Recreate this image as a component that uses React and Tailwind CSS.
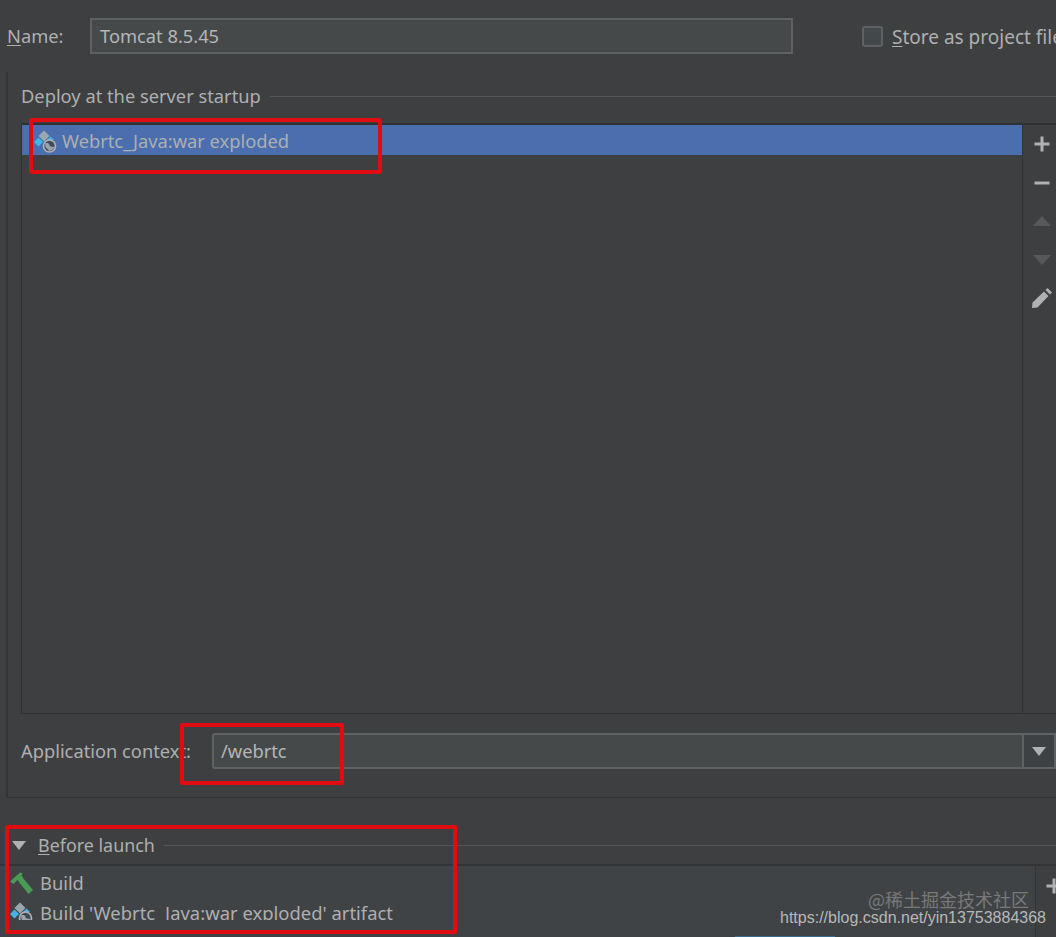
import React from 'react';

const uiFont = "font-['Noto_Sans',sans-serif]";

function ArtifactIcon({ className }) {
  return (
    <svg viewBox="0 0 23 23" className={className}>
      <path d="M10 0.5 L15.5 6 L10 11.5 L4.5 6 Z" fill="#9aa7b0" />
      <path d="M4.5 7.5 L9 12 L4.5 16.5 L0 12 Z" fill="#40b6e0" />
      <path d="M16.5 6.5 L20 10 L16 10.5 L13 10 Z" fill="#40b6e0" />
      <circle cx="15.5" cy="16" r="6" fill="#3e4a5c" stroke="#afb1b3" strokeWidth="1.7" />
      <path d="M11 13.5 C13 12.5 15 13 15.5 15 C16 17 18 16.5 20.5 17 C19.5 19.5 17 21 15 21 C14.5 19.5 12 18.5 11.5 17 Z" fill="#9aa3aa" />
    </svg>
  );
}

function HammerIcon({ className }) {
  return (
    <svg viewBox="0 0 23 23" className={className}>
      <path d="M0 9.5 L10 0.5 L12.5 1.5 L11.5 4 L13.5 6 L9.5 10 L7.5 8 L3.5 12 Z" fill="#499c54" />
      <path d="M8.5 9.5 L12.5 5.5 L23 18 L18.5 22 Z" fill="#499c54" />
    </svg>
  );
}

function GroupTitle({ children, className = '' }) {
  return (
    <div className={`flex items-center ${className}`}>
      <span className="shrink-0">{children}</span>
      <div className="ml-[9px] h-px flex-1 bg-[#535557]" />
    </div>
  );
}

function SideButton({ children, className = '' }) {
  return <div className={`flex h-[38.5px] items-center justify-center ${className}`}>{children}</div>;
}

export default function App() {
  return (
    <div className={`relative h-[937px] w-[1056px] overflow-hidden bg-[#3e3f41] text-[18.3px] leading-[26px] text-[#adafb1] ${uiFont}`}>
      {/* Name row */}
      <div className="flex h-[72px] items-start pl-[7px] pt-[18px]">
        <label className="mt-[5px] w-[83px] shrink-0"><span className="underline underline-offset-2">N</span>ame:</label>
        <div className="flex h-[36px] w-[703px] shrink-0 items-center border-2 border-[#5f6264] bg-[#45494a] pl-2 text-[#b4b6b7]">Tomcat 8.5.45</div>
        <div className="ml-[69px] mt-[8px] h-[21px] w-[21px] shrink-0 rounded-[3px] border-2 border-[#5d6163] bg-[#43484a]" />
        <label className="ml-[9px] mt-[6px] whitespace-nowrap text-[19px]"><span className="underline underline-offset-2">S</span>tore as project file</label>
      </div>

      {/* Deploy panel */}
      <div className="ml-[6px] h-[726px] border-b border-l-2 border-[#323436] pl-[13px] pt-[11px]">
        <GroupTitle className="h-[26px]">Deploy at the server startup</GroupTitle>
        <div className="mt-[14px] flex h-[591px] border-b border-l border-t-2 border-[#2f3133]">
          <div className="min-w-0 flex-1">
            <div className="flex h-[30px] items-center bg-[#4b6eaf] pl-[12px]">
              <ArtifactIcon className="mt-[2px] h-[23px] w-[23px] shrink-0" />
              <span className="ml-[5px] mt-[2px]">Webrtc_Java:war exploded</span>
            </div>
          </div>
          <div className="w-[34px] shrink-0 border-l border-[#323436] pl-[5px]">
            <SideButton>
              <svg viewBox="0 0 16 16" className="h-4 w-4"><path d="M6.5 0.5h3v6h6v3h-6v6h-3v-6h-6v-3h6z" fill="#afb1b3" /></svg>
            </SideButton>
            <SideButton>
              <svg viewBox="0 0 16 16" className="h-4 w-4"><rect x="0.5" y="6.5" width="15" height="3" fill="#afb1b3" /></svg>
            </SideButton>
            <SideButton>
              <svg viewBox="0 0 18 10" className="h-[10px] w-[18px]"><path d="M9 0 L18 10 H0 Z" fill="#56595b" /></svg>
            </SideButton>
            <SideButton>
              <svg viewBox="0 0 18 10" className="h-[10px] w-[18px]"><path d="M0 0 H18 L9 10 Z" fill="#56595b" /></svg>
            </SideButton>
            <SideButton>
              <svg viewBox="0 0 20 20" className="h-5 w-5"><path d="M0 20 L0.5 14.5 L12 3.5 L16.5 8 L5.5 19.5 Z M13.5 2 L15.5 0 L20 4.5 L18 6.5 Z" fill="#afb1b3" /></svg>
            </SideButton>
          </div>
        </div>
        <div className="mt-[19px] flex h-[36px] items-center">
          <span className="w-[191px] shrink-0">Application context:</span>
          <div className="flex h-[36px] flex-1 items-center rounded-l-[3px] border-2 border-[#5f6264] bg-[#45494a] pl-[7px] text-[#b4b6b7]">
            <span className="flex-1">/webrtc</span>
            <div className="flex h-full w-[32px] items-center justify-center border-l-2 border-[#5f6264] bg-[#3e4143]">
              <svg viewBox="0 0 14 9" className="h-[9px] w-[14px]"><path d="M0 0 H14 L7 9 Z" fill="#afb1b3" /></svg>
            </div>
          </div>
        </div>
      </div>

      {/* Before launch */}
      <div className="pt-[31px]">
        <div className="mb-[3px] flex h-[32px] items-center pl-[12px] text-[17.9px]">
          <svg viewBox="0 0 14 9" className="h-[9px] w-[14px] shrink-0"><path d="M0 0 H14 L7 9 Z" fill="#afb1b3" /></svg>
          <GroupTitle className="ml-[12px] flex-1"><span className="underline underline-offset-2">B</span>efore launch</GroupTitle>
        </div>
        <div className="flex h-[73px] border-t-2 border-[#323436]">
          <div className="min-w-0 flex-1 bg-[#404345] pl-[10px] pt-[2px]">
            <div className="flex h-[30px] items-center">
              <HammerIcon className="h-[23px] w-[23px] shrink-0" />
              <span className="ml-[7px]">Build</span>
            </div>
            <div className="flex h-[22px] items-start overflow-hidden">
              <ArtifactIcon className="mt-[4px] h-[23px] w-[23px] shrink-0" />
              <span className="ml-[7px] mt-[2px] whitespace-nowrap text-[18.45px]">Build 'Webrtc_Java:war exploded' artifact</span>
            </div>
          </div>
          <div className="w-[21px] shrink-0 border-l border-[#323436] pl-[10px] pt-[12px]">
            <svg viewBox="0 0 16 16" className="h-4 w-4"><path d="M6.5 0.5h3v6h6v3h-6v6h-3v-6h-6v-3h6z" fill="#afb1b3" /></svg>
          </div>
        </div>
      </div>

      {/* Annotations drawn over the screenshot */}
      <div className="absolute left-[29px] top-[118px] h-[56px] w-[353px] rounded-[3px] border-4 border-[#e00c12]" />
      <div className="absolute left-[180px] top-[723px] h-[62px] w-[164px] rounded-[2px] border-4 border-[#e00c12]" />
      <div className="absolute left-[5px] top-[825px] h-[109px] w-[452px] rounded-[2px] border-4 border-[#e00c12]" />

      {/* Watermark */}
      <div className="absolute right-[27px] top-[887px] whitespace-nowrap font-['Noto_Sans_CJK_SC',sans-serif] text-[18px] leading-[24px] text-[#77797a]">@稀土掘金技术社区</div>
      <div className="absolute right-[10px] top-[907px] whitespace-nowrap font-['Liberation_Sans',sans-serif] text-[16px] leading-[22px] text-[#b6b8b9]">https://blog.csdn.net/yin13753884368</div>
      <div className="absolute bottom-0 left-[735px] h-px w-[100px] bg-[#3a6a8c]" />
    </div>
  );
}
